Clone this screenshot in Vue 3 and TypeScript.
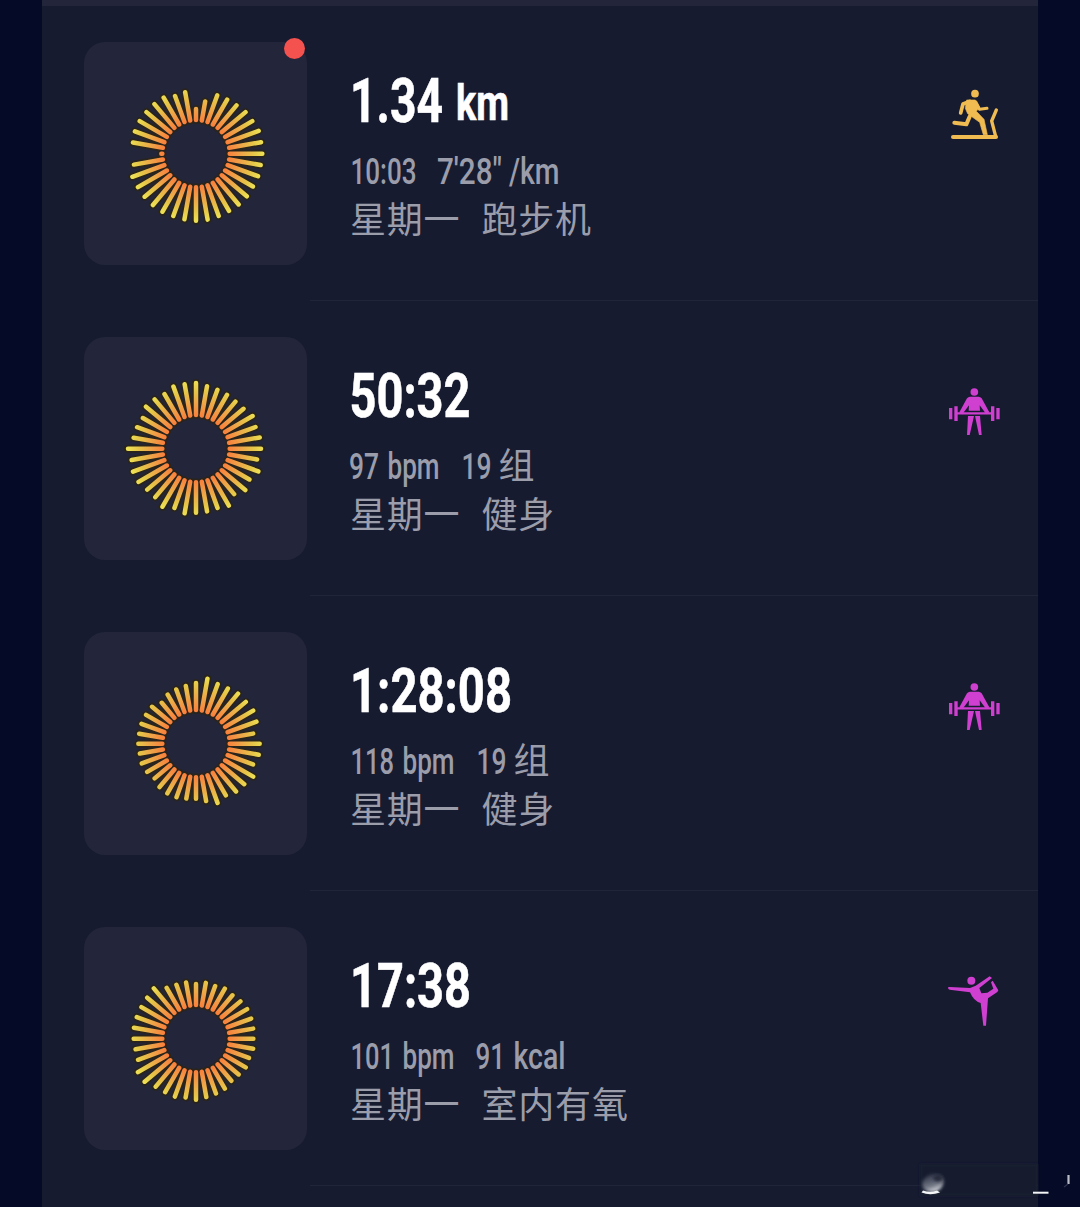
<script setup lang="ts">
interface Run {
  text: string
  x: number
  width?: number
  size?: number
  y?: number
  cjk?: boolean
}
interface Workout {
  title: Run[]
  stats: Run[]
  label: Run[]
  icon: 'treadmill' | 'barbell' | 'yoga'
  unread: boolean
  rays: number[]
}

const SQUEEZE = 0.78

const day: Run = { text: '星期一', x: 0, cjk: true }

const workouts: Workout[] = [
  {
    title: [{ text: '1.34', x: 0, width: 93 }, { text: 'km', x: 106, width: 53, size: 50, y: 58 }],
    stats: [{ text: '10:03', x: 0.5, width: 66 }, { text: '7\'28"', x: 87, width: 65 }, { text: '/km', x: 159, width: 50.5 }],
    label: [day, { text: '跑步机', x: 131.5, cjk: true }],
    icon: 'treadmill',
    unread: true,
    rays: [135, 160, 187, 188, 190, 195, 196, 201, 199, 200, 198, 199, 198, 200, 200, 199, 200, 202, 202, 201, 200, 202, 202, 202, 202, 204, 190, 105, 193, 196, 196, 195, 195, 195, 185, 188],
  },
  {
    title: [{ text: '50:32', x: -0.5, width: 121 }],
    stats: [{ text: '97', x: -1, width: 30 }, { text: 'bpm', x: 37.5, width: 52 }, { text: '19', x: 111.5, width: 30 }, { text: '组', x: 148.5, cjk: true }],
    label: [day, { text: '健身', x: 131.5, cjk: true }],
    icon: 'barbell',
    unread: false,
    rays: [198, 191, 189, 187, 185, 187, 197, 191, 195, 196, 187, 200, 186, 194, 179, 198, 190, 192, 193, 198, 190, 202, 191, 192, 200, 202, 197, 205, 191, 189, 185, 197, 194, 190, 199, 197],
  },
  {
    title: [{ text: '1:28:08', x: 0, width: 162 }],
    stats: [{ text: '118', x: 0.5, width: 43.5 }, { text: 'bpm', x: 52.5, width: 52 }, { text: '19', x: 126.500, width: 30 }, { text: '组', x: 163.5, cjk: true }],
    label: [day, { text: '健身', x: 131.5, cjk: true }],
    icon: 'barbell',
    unread: false,
    rays: [183, 199, 191, 192, 197, 196, 199, 194, 175, 192, 192, 183, 199, 190, 188, 180, 190, 176, 166, 168, 172, 173, 171, 163, 170, 174, 172, 174, 174, 175, 174, 173, 161, 171, 174, 177],
  },
  {
    title: [{ text: '17:38', x: 0, width: 121 }],
    stats: [{ text: '101', x: 0.5, width: 43.5 }, { text: 'bpm', x: 52.5, width: 52 }, { text: '91', x: 125.5, width: 29.5 }, { text: 'kcal', x: 163.5, width: 52 }],
    label: [day, { text: '室内有氧', x: 131.5, cjk: true }],
    icon: 'yoga',
    unread: false,
    rays: [165, 171, 169, 174, 171, 175, 178, 177, 175, 173, 175, 170, 173, 168, 166, 174, 176, 179, 184, 180, 186, 186, 189, 202, 202, 186, 185, 188, 190, 190, 190, 192, 198, 177, 173, 172],
  },
]

function place(r: Run): string {
  return `translate(${r.x} 0)` + (r.cjk ? '' : ` scale(${SQUEEZE} 1)`)
}
function measure(r: Run): string | undefined {
  return r.width ? (r.width / SQUEEZE).toFixed(2) : undefined
}

// One path holding every spoke: from the inner ring out to its own length.
function spokes(lengths: number[]): string {
  return lengths
    .map((len, i) => {
      const a = (i * Math.PI) / 18
      const s = Math.sin(a)
      const c = -Math.cos(a)
      return `M${(101 * s).toFixed(1)} ${(101 * c).toFixed(1)}L${((len - 1) * s).toFixed(1)} ${((len - 1) * c).toFixed(1)}`
    })
    .join('')
}
</script>

<template>
  <main class="screen">
    <section class="panel">
      <article v-for="(w, i) in workouts" :key="i" class="row">
        <div class="tile">
          <svg viewBox="-336 -335 669 669" class="burst">
            <defs>
              <radialGradient :id="'glow' + i" gradientUnits="userSpaceOnUse" cx="0" cy="0" r="205">
                <stop offset="0.47" stop-color="#f9803c" />
                <stop offset="0.66" stop-color="#efa348" />
                <stop offset="0.84" stop-color="#e6c548" />
                <stop offset="1" stop-color="#eee256" />
              </radialGradient>
            </defs>
            <path :d="spokes(w.rays)" stroke="#2c2310" stroke-width="24" opacity="0.7" />
            <path :d="spokes(w.rays)" :stroke="`url(#glow${i})`" stroke-width="13.5" />
          </svg>
          <i v-if="w.unread" class="unread"></i>
        </div>
        <div class="copy">
          <svg class="title">
            <text v-for="r in w.title" :key="r.x" :transform="place(r)" :y="r.y ?? 60" :font-size="r.size ?? 62" :textLength="measure(r)" lengthAdjust="spacingAndGlyphs">{{ r.text }}</text>
          </svg>
          <svg class="line">
            <text v-for="r in w.stats" :key="r.x" :class="{ cjk: r.cjk }" :transform="place(r)" y="42" :textLength="measure(r)" lengthAdjust="spacingAndGlyphs">{{ r.text }}</text>
          </svg>
          <svg class="line">
            <text v-for="r in w.label" :key="r.x" class="cjk" :transform="place(r)" y="43">{{ r.text }}</text>
          </svg>
        </div>
        <svg class="icon" viewBox="0 0 240 240">
          <g v-if="w.icon === 'treadmill'" fill="none" stroke="#f0bb50" stroke-linejoin="round" stroke-linecap="round">
            <circle cx="120" cy="56" r="11.5" fill="#f0bb50" stroke="none" />
            <path d="M96 75L120 75Q126 77 128 84L134 96L124 109L147 133L157 179L145 179L134 142L98 116L91 100Z" fill="#f0bb50" stroke-width="2" />
            <path d="M104 79L84 87L77 114" stroke-width="11" />
            <path d="M123 86L134 103L156 100" stroke-width="9" />
            <path d="M104 125L94 148L58 143" stroke-width="12" />
            <path d="M54 186L183 186" stroke-width="12" />
            <path d="M182 184L170 138L184 105" stroke-width="10" />
          </g>
          <g v-else-if="w.icon === 'barbell'" fill="#cf3fd0">
            <circle cx="118" cy="66" r="11.5" />
            <path d="M105 80H131Q136 80 140 85L163 127L154 133L134 106L135 122H101L102 106L82 133L73 127L96 85Q100 80 105 80Z" />
            <path d="M66 126.500H170V133.500H66ZM58 109H68V153H58ZM42 114H52V148H42ZM168 109H178V153H168ZM184 114H194V148H184Z" />
            <path d="M99 138H117L104 195H96ZM120 138H135L140 195H132Z" />
          </g>
          <g v-else fill="#cf3fd0">
            <circle cx="109" cy="62" r="12" />
            <path d="M39 83Q39 80 44 81L105 84L122 77L164 49L171 54L133 84L139 100L157 98L175 86L168 67L173 62L190 91L187 96L159 115L153 197H145L137 129Q116 124 105 97L44 89Q39 88 39 83Z" />
          </g>
        </svg>
      </article>
    </section>
    <svg class="mark" viewBox="0 0 170 57">
      <defs>
        <filter id="soft" x="-30%" y="-30%" width="160%" height="160%"><feGaussianBlur stdDeviation="1.6" /></filter>
        <linearGradient id="fade" x1="0" y1="0" x2="0" y2="1">
          <stop offset="0" stop-color="#8b909d" stop-opacity="0.2" />
          <stop offset="0.65" stop-color="#858a97" stop-opacity="0.85" />
          <stop offset="1" stop-color="#eceef2" />
        </linearGradient>
      </defs>
      <rect x="10" y="14" width="118" height="32" fill="#161b2e" filter="url(#soft)" />
      <ellipse cx="23" cy="33" rx="11" ry="9" fill="url(#fade)" filter="url(#soft)" transform="rotate(-18 23 33)" />
      <ellipse cx="28" cy="28" rx="5" ry="3.5" fill="#252a3a" filter="url(#soft)" />
      <path d="M11.500 42.500Q20 46 30 42.500L27 40.500Q20 43 13 40.500Z" fill="#f4f5f7" />
      <path d="M123 42.700H138.500" stroke="#f4f5f7" stroke-width="2" />
      <path d="M158.500 25V34" stroke="#b9bdc7" stroke-width="2.2" />
      <path d="M158 34L154 37" stroke="#2c3250" stroke-width="1.2" />
    </svg>
  </main>
</template>

<style>
body {
  margin: 0;
  background: #050a26;
}
</style>

<style scoped>
.screen {
  position: relative;
  box-sizing: border-box;
  width: 1080px;
  height: 1207px;
  padding: 0 42px;
  overflow: hidden;
  background: #050a26;
}
.panel {
  box-sizing: border-box;
  height: 1207px;
  overflow: hidden;
  border-top: 6px solid #23253b;
  background: #161b30;
}
.row {
  display: flex;
  box-sizing: border-box;
  height: 295px;
  padding-left: 42px;
  background: linear-gradient(#212539, #212539) 268px 294px / 728px 1px no-repeat;
}
.tile {
  position: relative;
  flex: none;
  width: 223px;
  height: 223px;
  margin-top: 36px;
  border-radius: 21px;
  background: #23253b;
}
.burst {
  display: block;
  width: 223px;
  height: 223px;
  fill: none;
  stroke-linecap: round;
}
.unread {
  position: absolute;
  top: -4px;
  right: 2px;
  width: 21px;
  height: 21px;
  border-radius: 50%;
  background: #f3524f;
}
.copy {
  display: flex;
  flex: 1;
  flex-direction: column;
  margin-left: 43px;
  padding-top: 56px;
  font-family: Roboto, "Noto Sans CJK SC", sans-serif;
}
.title,
.line {
  display: block;
  width: 100%;
  overflow: visible;
}
.title {
  height: 80px;
  fill: #fff;
  stroke: #fff;
  stroke-width: 0.6px;
  font-weight: 700;
}
.line {
  height: 48px;
  fill: #9b9dab;
  font-size: 36.5px;
  font-weight: 500;
}
.cjk {
  font-family: "Noto Sans CJK SC", sans-serif;
  font-size: 36px;
  font-weight: 400;
  letter-spacing: 0.8px;
}
.icon {
  flex: none;
  width: 80px;
  height: 80px;
  margin: 69px 23px 0 0;
}
.mark {
  position: absolute;
  right: 0;
  bottom: 0;
  width: 170px;
  height: 57px;
}
</style>
